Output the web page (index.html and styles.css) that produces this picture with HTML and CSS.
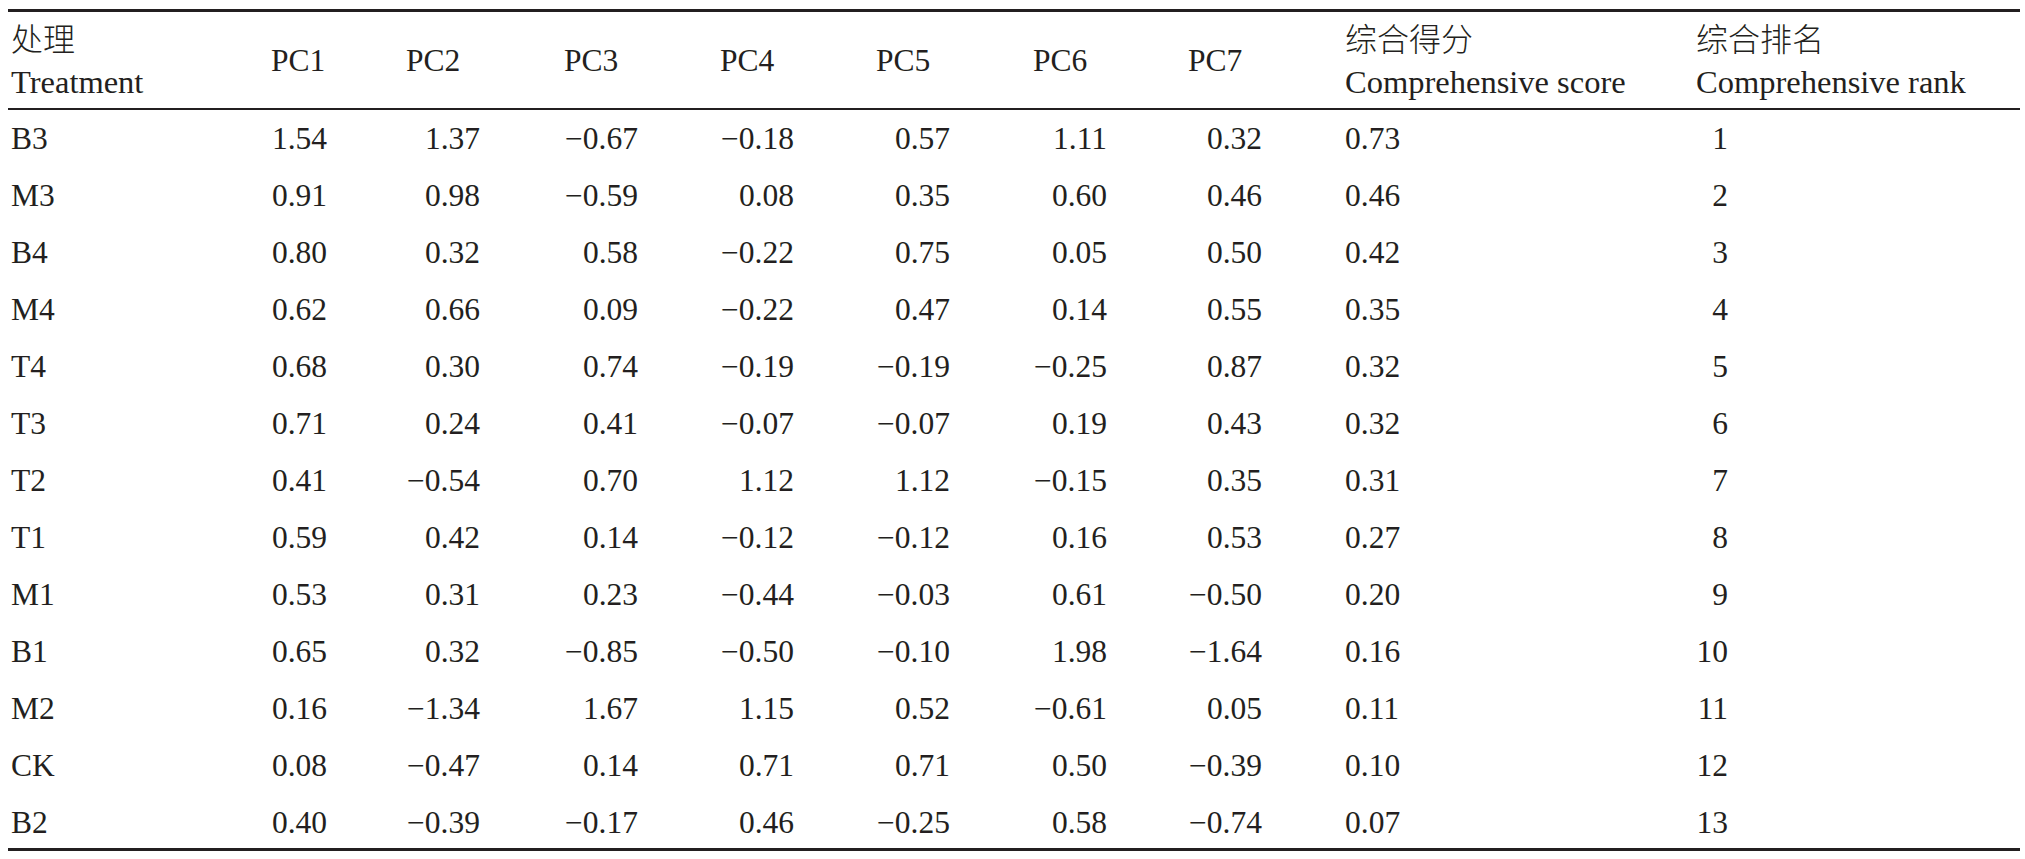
FILE: index.html
```html
<!DOCTYPE html>
<html lang="zh-CN">
<head>
<meta charset="utf-8">
<title>综合得分</title>
<link rel="stylesheet" href="styles.css">
</head>
<body>
<div class="page">
<table class="tbl">
<colgroup>
<col class="c-name"><col class="c-pc1"><col class="c-pc2"><col class="c-pc3"><col class="c-pc4"><col class="c-pc5"><col class="c-pc6"><col class="c-pc7"><col class="c-score"><col class="c-rank">
</colgroup>
<thead>
<tr>
<th class="h-name"><span class="zh">处理</span><span class="en">Treatment</span></th>
<th class="h-pc">PC1</th>
<th class="h-pc">PC2</th>
<th class="h-pc">PC3</th>
<th class="h-pc">PC4</th>
<th class="h-pc">PC5</th>
<th class="h-pc">PC6</th>
<th class="h-pc">PC7</th>
<th class="h-score"><span class="zh">综合得分</span><span class="en">Comprehensive score</span></th>
<th class="h-rank"><span class="zh">综合排名</span><span class="en">Comprehensive rank</span></th>
</tr>
</thead>
<tbody>
<tr><td>B3</td><td>1.54</td><td>1.37</td><td>−0.67</td><td>−0.18</td><td>0.57</td><td>1.11</td><td>0.32</td><td>0.73</td><td><span class="rk">1</span></td></tr>
<tr><td>M3</td><td>0.91</td><td>0.98</td><td>−0.59</td><td>0.08</td><td>0.35</td><td>0.60</td><td>0.46</td><td>0.46</td><td><span class="rk">2</span></td></tr>
<tr><td>B4</td><td>0.80</td><td>0.32</td><td>0.58</td><td>−0.22</td><td>0.75</td><td>0.05</td><td>0.50</td><td>0.42</td><td><span class="rk">3</span></td></tr>
<tr><td>M4</td><td>0.62</td><td>0.66</td><td>0.09</td><td>−0.22</td><td>0.47</td><td>0.14</td><td>0.55</td><td>0.35</td><td><span class="rk">4</span></td></tr>
<tr><td>T4</td><td>0.68</td><td>0.30</td><td>0.74</td><td>−0.19</td><td>−0.19</td><td>−0.25</td><td>0.87</td><td>0.32</td><td><span class="rk">5</span></td></tr>
<tr><td>T3</td><td>0.71</td><td>0.24</td><td>0.41</td><td>−0.07</td><td>−0.07</td><td>0.19</td><td>0.43</td><td>0.32</td><td><span class="rk">6</span></td></tr>
<tr><td>T2</td><td>0.41</td><td>−0.54</td><td>0.70</td><td>1.12</td><td>1.12</td><td>−0.15</td><td>0.35</td><td>0.31</td><td><span class="rk">7</span></td></tr>
<tr><td>T1</td><td>0.59</td><td>0.42</td><td>0.14</td><td>−0.12</td><td>−0.12</td><td>0.16</td><td>0.53</td><td>0.27</td><td><span class="rk">8</span></td></tr>
<tr><td>M1</td><td>0.53</td><td>0.31</td><td>0.23</td><td>−0.44</td><td>−0.03</td><td>0.61</td><td>−0.50</td><td>0.20</td><td><span class="rk">9</span></td></tr>
<tr><td>B1</td><td>0.65</td><td>0.32</td><td>−0.85</td><td>−0.50</td><td>−0.10</td><td>1.98</td><td>−1.64</td><td>0.16</td><td><span class="rk">10</span></td></tr>
<tr><td>M2</td><td>0.16</td><td>−1.34</td><td>1.67</td><td>1.15</td><td>0.52</td><td>−0.61</td><td>0.05</td><td>0.11</td><td><span class="rk">11</span></td></tr>
<tr><td>CK</td><td>0.08</td><td>−0.47</td><td>0.14</td><td>0.71</td><td>0.71</td><td>0.50</td><td>−0.39</td><td>0.10</td><td><span class="rk">12</span></td></tr>
<tr class="last"><td>B2</td><td>0.40</td><td>−0.39</td><td>−0.17</td><td>0.46</td><td>−0.25</td><td>0.58</td><td>−0.74</td><td>0.07</td><td><span class="rk">13</span></td></tr>
</tbody>
</table>
</div>
</body>
</html>
```
FILE: styles.css
```css
html, body {
  margin: 0;
  padding: 0;
  background: #ffffff;
}
.page {
  padding: 9px 5px 0 8px;
}
.tbl {
  table-layout: fixed;
  border-collapse: separate;
  border-spacing: 0;
  width: 2012px;
  color: #231f20;
  font-family: "Liberation Serif", serif;
  font-size: 31.5px;
}
.c-name { width: 263px; }
.c-pc1 { width: 135px; }
.c-pc2 { width: 158px; }
.c-pc3 { width: 156px; }
.c-pc4 { width: 156px; }
.c-pc5 { width: 157px; }
.c-pc6 { width: 155px; }
.c-pc7 { width: 157px; }
.c-score { width: 351px; }
.c-rank { width: 324px; }

.tbl th {
  font-weight: normal;
  text-align: left;
  vertical-align: middle;
  padding: 3px 0;
  border-top: 3px solid #231f20;
  border-bottom: 2px solid #231f20;
  line-height: 45px;
  white-space: nowrap;
}
.tbl th.h-name { padding-left: 3px; }
.zh {
  display: block;
  font-family: "Noto Sans CJK SC", sans-serif;
  font-size: 32px;
  font-weight: 300;
  line-height: 45px;
  height: 45px;
}
.en {
  display: block;
  font-size: 32.5px;
  line-height: 45px;
}

.tbl td {
  padding: 0;
  line-height: 57px;
  text-align: right;
  white-space: nowrap;
}
.tbl td:nth-child(1) { text-align: left; padding-left: 3px; }
.tbl td:nth-child(2) { padding-right: 79px; }
.tbl td:nth-child(3) { padding-right: 84px; }
.tbl td:nth-child(4) { padding-right: 82px; }
.tbl td:nth-child(5) { padding-right: 82px; }
.tbl td:nth-child(6) { padding-right: 83px; }
.tbl td:nth-child(7) { padding-right: 81px; }
.tbl td:nth-child(8) { padding-right: 83px; }
.tbl td:nth-child(9) { text-align: left; }
.tbl td:nth-child(10) { text-align: left; }
.rk {
  display: inline-block;
  width: 32px;
  text-align: right;
}
.tbl tr.last td {
  line-height: 51px;
  padding-top: 3px;
  border-bottom: 3px solid #231f20;
}
```
